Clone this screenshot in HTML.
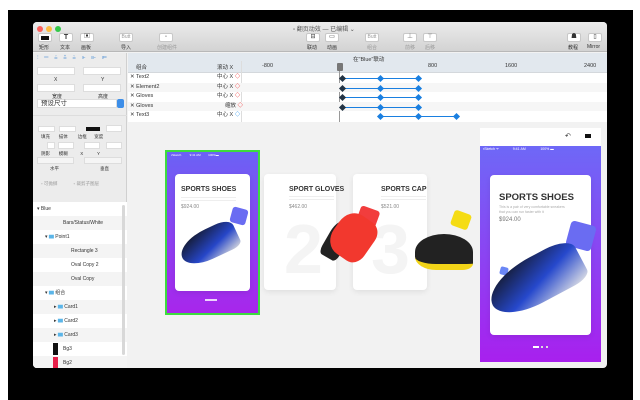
<!DOCTYPE html>
<html><head><meta charset="utf-8"><style>
*{margin:0;padding:0;box-sizing:border-box}
body{width:640px;height:400px;background:#fff;position:relative;overflow:hidden;font-family:"Liberation Sans","Noto Sans CJK SC",sans-serif;font-size:6px;color:#333}
.a{position:absolute;white-space:nowrap}
.blk{left:8px;top:10px;width:625px;height:390px;background:#000}
.win{left:33px;top:22px;width:574px;height:346px;background:#f2f2f2;overflow:hidden;border-radius:4px}
.tb{left:0;top:0;width:574px;height:30px;background:linear-gradient(#ebebeb,#d3d3d3);border-bottom:1px solid #b8b8b8}
.dot{width:6px;height:6px;border-radius:50%;top:4px}
.btn{width:14px;height:9px;background:#fff;border-radius:2px;border:1px solid #c8c8c8;top:11px}
.lbl{font-size:5px;color:#333;top:22px}
.left{left:0;top:31px;width:94px;height:315px;background:#ececec;border-right:1px solid #d0d0d0}
.inp{height:8px;background:#fff;border:1px solid #ddd}
.row{left:0;width:94px;height:14px;font-size:5px;line-height:14px}
.tl{left:95px;top:31px;width:479px;height:69px;background:#fff}
.tr{left:0;width:479px;height:9.6px;font-size:5.5px;line-height:9.6px}
.kf{width:5px;height:5px;background:#1a7fe0;transform:rotate(45deg)}
.card{background:#fff;border-radius:4px;box-shadow:0 2px 6px rgba(0,0,0,.08)}
.t{font-weight:bold;color:#333}
</style></head><body>
<div class="a blk"></div>
<div class="a win">
 <div class="a tb">
  <div class="a dot" style="left:4px;background:#fc605c"></div>
  <div class="a dot" style="left:13px;background:#fdbc40"></div>
  <div class="a dot" style="left:22px;background:#34c84a"></div>
  <div class="a" style="left:260px;top:2px;font-size:6px;color:#555">▫ 翻页动效 — 已编辑 ⌄</div>
  <div class="a btn" style="left:5px"><div class="a" style="left:2px;top:2px;width:8px;height:4px;background:#111"></div></div>
  <div class="a btn" style="left:26px;font-weight:bold;font-size:7px;text-align:center;line-height:7px">T</div>
  <div class="a btn" style="left:47px;text-align:center;font-size:6px;line-height:7px">▣</div>
  <div class="a btn" style="left:86px;font-size:5px;color:#999;text-align:center;line-height:7px">Butt</div>
  <div class="a btn" style="left:126px;font-size:5px;color:#999;text-align:center;line-height:7px">⚬</div>
  <div class="a btn" style="left:273px;text-align:center;line-height:7px">⊟</div>
  <div class="a btn" style="left:292px;text-align:center;line-height:7px">▭</div>
  <div class="a btn" style="left:332px;font-size:5px;color:#999;text-align:center;line-height:7px">Butt</div>
  <div class="a btn" style="left:370px;text-align:center;line-height:7px;color:#777">⊥</div>
  <div class="a btn" style="left:390px;text-align:center;line-height:7px;color:#777">⊤</div>
  <div class="a btn" style="left:534px;text-align:center;line-height:7px">☗</div>
  <div class="a btn" style="left:555px;text-align:center;line-height:7px">▯</div>
  <div class="a lbl" style="left:6px">矩形</div><div class="a lbl" style="left:27px">文本</div><div class="a lbl" style="left:48px">画板</div>
  <div class="a lbl" style="left:88px">导入</div><div class="a lbl" style="left:124px;color:#999">创建组件</div>
  <div class="a lbl" style="left:274px">联动</div><div class="a lbl" style="left:294px">动画</div><div class="a lbl" style="left:334px;color:#999">组合</div>
  <div class="a lbl" style="left:372px;color:#999">前移</div><div class="a lbl" style="left:392px;color:#999">后移</div>
  <div class="a lbl" style="left:535px">教程</div><div class="a lbl" style="left:554px">Mirror</div>
 </div>
 <div class="a left">
  <div class="a" style="left:4px;top:2px;color:#6aa0d8;font-size:6px;letter-spacing:2px">⫶ ═ ≚ ≛ ≚ ⊩ ⊪ ⊫</div>
  <div class="a inp" style="left:4px;top:14px;width:38px"></div><div class="a inp" style="left:50px;top:14px;width:38px"></div>
  <div class="a" style="left:21px;top:24px;font-size:5px">X</div><div class="a" style="left:68px;top:24px;font-size:5px">Y</div>
  <div class="a inp" style="left:4px;top:31px;width:38px"></div><div class="a inp" style="left:50px;top:31px;width:38px"></div>
  <div class="a" style="left:19px;top:40px;font-size:5px">宽度</div><div class="a" style="left:65px;top:40px;font-size:5px">高度</div>
  <div class="a" style="left:4px;top:46px;width:80px;height:9px;background:#fff;border:1px solid #ddd;font-size:6.5px;line-height:8px;padding-left:3px">预设尺寸</div>
  <div class="a" style="left:84px;top:46px;width:7px;height:9px;background:#3d8ee8;border-radius:2px"></div>
  <div class="a" style="left:0;top:62px;width:94px;height:1px;background:#ddd"></div>
  <div class="a inp" style="left:5px;top:73px;width:17px;height:6px"></div>
  <div class="a inp" style="left:26px;top:73px;width:17px;height:6px"></div>
  <div class="a" style="left:53px;top:74px;width:14px;height:4px;background:#111"></div>
  <div class="a inp" style="left:73px;top:72px;width:16px;height:7px"></div>
  <div class="a" style="left:8px;top:81px;font-size:4.5px">填充&nbsp;&nbsp;&nbsp;&nbsp;&nbsp;&nbsp;&nbsp;描体&nbsp;&nbsp;&nbsp;&nbsp;&nbsp;&nbsp;&nbsp;&nbsp;边框&nbsp;&nbsp;&nbsp;&nbsp;&nbsp;&nbsp;宽度</div>
  <div class="a inp" style="left:14px;top:89px;width:8px;height:7px"></div>
  <div class="a inp" style="left:25px;top:89px;width:16px;height:7px"></div>
  <div class="a inp" style="left:51px;top:89px;width:16px;height:7px"></div>
  <div class="a inp" style="left:73px;top:89px;width:16px;height:7px"></div>
  <div class="a" style="left:8px;top:98px;font-size:4.5px">阴影&nbsp;&nbsp;&nbsp;&nbsp;&nbsp;&nbsp;&nbsp;模糊&nbsp;&nbsp;&nbsp;&nbsp;&nbsp;&nbsp;&nbsp;&nbsp;&nbsp;&nbsp;X&nbsp;&nbsp;&nbsp;&nbsp;&nbsp;&nbsp;&nbsp;&nbsp;&nbsp;&nbsp;&nbsp;Y</div>
  <div class="a inp" style="left:4px;top:104px;width:37px;height:7px;background:#f5f5f5"></div>
  <div class="a inp" style="left:51px;top:104px;width:38px;height:7px;background:#f5f5f5"></div>
  <div class="a" style="left:17px;top:113px;font-size:4.5px">水平</div><div class="a" style="left:67px;top:113px;font-size:4.5px">垂直</div>
  <div class="a" style="left:8px;top:128px;font-size:4.5px;color:#999">▫ 可抛掷&nbsp;&nbsp;&nbsp;&nbsp;&nbsp;&nbsp;&nbsp;&nbsp;&nbsp;&nbsp;&nbsp;&nbsp;&nbsp;▫ 裁剪子图层</div>
  <div class="a" style="left:0;top:149px;width:94px;height:166px;background:#fff">
   <div class="a row" style="top:0;padding-left:4px">▾ Blue</div>
   <div class="a row" style="top:14px;background:#f4f4f4;padding-left:30px">Bars/Status/White</div>
   <div class="a row" style="top:28px;padding-left:12px">▾ <span style="color:#5bb5e8">▆</span> Point1</div>
   <div class="a row" style="top:42px;background:#f4f4f4;padding-left:38px">Rectangle 3</div>
   <div class="a row" style="top:56px;padding-left:38px">Oval Copy 2</div>
   <div class="a row" style="top:70px;background:#f4f4f4;padding-left:38px">Oval Copy</div>
   <div class="a row" style="top:84px;padding-left:12px">▾ <span style="color:#5bb5e8">▆</span> 组合</div>
   <div class="a row" style="top:98px;background:#f4f4f4;padding-left:21px">▸ <span style="color:#5bb5e8">▆</span> Card1</div>
   <div class="a row" style="top:112px;padding-left:21px">▸ <span style="color:#5bb5e8">▆</span> Card2</div>
   <div class="a row" style="top:126px;background:#f4f4f4;padding-left:21px">▸ <span style="color:#5bb5e8">▆</span> Card3</div>
   <div class="a row" style="top:140px;padding-left:30px">Bg3</div>
   <div class="a" style="left:20px;top:141px;width:5px;height:12px;background:#111"></div>
   <div class="a row" style="top:154px;background:#f4f4f4;padding-left:30px">Bg2</div>
   <div class="a" style="left:20px;top:155px;width:5px;height:11px;background:#e8204a"></div>
   <div class="a" style="left:89px;top:3px;width:3px;height:150px;background:#d8d8d8;border-radius:2px"></div>
  </div>
 </div>
 <div class="a tl">
  <div class="a" style="left:0;top:0;width:479px;height:20px;background:#e2e8ee;border-bottom:1px solid #d4d8dc"></div>
  <div class="a" style="left:225px;top:2px;font-size:5.5px">在"Blue"联动</div>
  <div class="a" style="left:8px;top:10px;font-size:5.5px">组合</div>
  <div class="a" style="left:89px;top:10px;font-size:5.5px">滚动 X</div>
  <div class="a" style="left:134px;top:10px;font-size:5.5px">-800</div>
  <div class="a" style="left:300px;top:10px;font-size:5.5px">800</div>
  <div class="a" style="left:377px;top:10px;font-size:5.5px">1600</div>
  <div class="a" style="left:456px;top:10px;font-size:5.5px">2400</div>
  <div class="a" style="left:113px;top:8px;width:1px;height:61px;background:#ddd"></div>
  <div class="a" style="left:209px;top:10px;width:6px;height:8px;background:#777;border-radius:1px"></div>
  <div class="a" style="left:211px;top:18px;width:1px;height:51px;background:#999"></div>
  <div class="a tr" style="top:20px;padding-left:2px">✕ Text2<span class="a" style="left:89px">中心 X <b style="color:#e33">◇</b></span></div>
  <div class="a tr" style="top:29.6px;background:#f6f6f6;padding-left:2px">✕ Element2<span class="a" style="left:89px">中心 X <b style="color:#e33">◇</b></span></div>
  <div class="a tr" style="top:39.2px;padding-left:2px">✕ Gloves<span class="a" style="left:89px">中心 X <b style="color:#e33">◇</b></span></div>
  <div class="a tr" style="top:48.8px;background:#f6f6f6;padding-left:2px">✕ Gloves<span class="a" style="left:97px">缩放 <b style="color:#e33">◇</b></span></div>
  <div class="a tr" style="top:58.4px;padding-left:2px">✕ Text3<span class="a" style="left:89px">中心 X <b style="color:#39e">◇</b></span></div>
  <div class="a" style="left:215px;top:25px;width:76px;height:1px;background:#1a7fe0"></div>
  <div class="a" style="left:215px;top:34.5px;width:76px;height:1px;background:#1a7fe0"></div>
  <div class="a" style="left:215px;top:44px;width:76px;height:1px;background:#1a7fe0"></div>
  <div class="a" style="left:215px;top:54px;width:76px;height:1px;background:#1a7fe0"></div>
  <div class="a" style="left:253px;top:63px;width:76px;height:1px;background:#1a7fe0"></div>
  <div class="a kf" style="left:212px;top:23px;background:#234"></div><div class="a kf" style="left:250px;top:23px"></div><div class="a kf" style="left:288px;top:23px"></div>
  <div class="a kf" style="left:212px;top:32.5px;background:#234"></div><div class="a kf" style="left:250px;top:32.5px"></div><div class="a kf" style="left:288px;top:32.5px"></div>
  <div class="a kf" style="left:212px;top:42px;background:#234"></div><div class="a kf" style="left:250px;top:42px"></div><div class="a kf" style="left:288px;top:42px"></div>
  <div class="a kf" style="left:212px;top:52px;background:#234"></div><div class="a kf" style="left:250px;top:52px"></div><div class="a kf" style="left:288px;top:52px"></div>
  <div class="a kf" style="left:250px;top:61px"></div><div class="a kf" style="left:288px;top:61px"></div><div class="a kf" style="left:326px;top:61px"></div>
 </div>
 <!-- canvas -->
 <div class="a" style="left:132px;top:128px;width:95px;height:165px;border:2px solid #3ddc3d;background:linear-gradient(#6b62f5,#a826ec)">
  <div class="a" style="left:4px;top:1px;font-size:3px;color:#fff">▪Sketch&nbsp;&nbsp;&nbsp;&nbsp;&nbsp;&nbsp;&nbsp;&nbsp;&nbsp;&nbsp;9:41 AM&nbsp;&nbsp;&nbsp;&nbsp;&nbsp;&nbsp;&nbsp;&nbsp;&nbsp;100%▬</div>
  <div class="a card" style="left:8px;top:22px;width:75px;height:117px">
   <div class="a t" style="left:6px;top:12px;font-size:7px">SPORTS SHOES</div>
   <div class="a" style="left:6px;top:23px;width:55px;height:4px;border-top:1px solid #eee;border-bottom:1px solid #eee"></div>
   <div class="a" style="left:6px;top:30px;font-size:5px;color:#888">$924.00</div>
   <div class="a" style="left:56px;top:34px;width:16px;height:16px;background:#6a6cf2;border-radius:3px;transform:rotate(15deg)"></div>
   <div class="a" style="left:4px;top:55px;width:60px;height:30px;background:linear-gradient(160deg,#111,#2646c8 60%,#ddd);border-radius:60% 30% 20% 50%;transform:rotate(-25deg)"></div>
  </div>
  <div class="a" style="left:38px;top:147px;width:12px;height:2px;background:#fff;opacity:.8"></div>
 </div>
 <div class="a card" style="left:231px;top:152px;width:72px;height:116px">
  <div class="a t" style="left:25px;top:12px;font-size:7px">SPORT GLOVES</div>
  <div class="a" style="left:25px;top:22px;width:45px;height:4px;border-top:1px solid #eee;border-bottom:1px solid #eee"></div>
  <div class="a" style="left:25px;top:30px;font-size:5px;color:#888">$462.00</div>
  <div class="a" style="left:20px;top:35px;font-size:70px;color:#f4f4f4;font-weight:bold">2</div>
 </div>
 <div class="a card" style="left:320px;top:152px;width:74px;height:116px">
  <div class="a t" style="left:28px;top:12px;font-size:7px">SPORTS CAP</div>
  <div class="a" style="left:28px;top:22px;width:45px;height:4px;border-top:1px solid #eee;border-bottom:1px solid #eee"></div>
  <div class="a" style="left:28px;top:30px;font-size:5px;color:#888">$521.00</div>
  <div class="a" style="left:18px;top:35px;font-size:70px;color:#f4f4f4;font-weight:bold">3</div>
 </div>
 <div class="a" style="left:325px;top:186px;width:20px;height:18px;background:#f23d3d;border-radius:3px;transform:rotate(20deg)"></div>
 <div class="a" style="left:294px;top:198px;width:20px;height:40px;background:#222;border-radius:40% 40% 20% 20%;transform:rotate(30deg)"></div>
 <div class="a" style="left:300px;top:192px;width:40px;height:46px;background:#f2382e;border-radius:40% 30% 30% 40%;transform:rotate(35deg)"></div>
 <div class="a" style="left:419px;top:190px;width:18px;height:16px;background:#f5dc14;border-radius:3px;transform:rotate(20deg)"></div>
 <div class="a" style="left:382px;top:212px;width:58px;height:36px;background:#222;border-radius:55% 55% 20% 40%;border-bottom:6px solid #f2d418"></div>
 <div class="a" style="left:447px;top:106px;width:121px;height:234px;background:#fff">
  <div class="a" style="left:85px;top:4px;font-size:7px">↶</div>
  <div class="a" style="left:105px;top:6px;width:6px;height:4px;background:#111"></div>
  <div class="a" style="left:0;top:18px;width:121px;height:216px;background:linear-gradient(#6e68f7,#a820ee)">
   <div class="a" style="left:3px;top:1px;font-size:3.5px;color:#fff">▪Sketch ᯤ&nbsp;&nbsp;&nbsp;&nbsp;&nbsp;&nbsp;&nbsp;&nbsp;&nbsp;&nbsp;&nbsp;&nbsp;&nbsp;&nbsp;9:41 AM&nbsp;&nbsp;&nbsp;&nbsp;&nbsp;&nbsp;&nbsp;&nbsp;&nbsp;&nbsp;&nbsp;&nbsp;&nbsp;&nbsp;&nbsp;100% ▬</div>
   <div class="a card" style="left:10px;top:29px;width:101px;height:160px;overflow:visible">
    <div class="a t" style="left:9px;top:17px;font-size:9.5px">SPORTS SHOES</div>
    <div class="a" style="left:9px;top:30px;font-size:3.5px;color:#aaa;line-height:5px">This is a pair of very comfortable sneakers<br>that you can run faster with it</div>
    <div class="a" style="left:9px;top:42px;font-size:6px;color:#777">$924.00</div>
    <div class="a" style="left:78px;top:48px;width:26px;height:26px;background:#6a6cf2;border-radius:4px;transform:rotate(15deg)"></div>
    <div class="a" style="left:10px;top:92px;width:8px;height:8px;background:#6a86f5;border-radius:2px;transform:rotate(15deg)"></div>
    <div class="a" style="left:-4px;top:82px;width:100px;height:46px;background:linear-gradient(160deg,#111,#2648cc 55%,#e6e6e6);border-radius:60% 30% 20% 50%;transform:rotate(-28deg)"></div>
   </div>
   <div class="a" style="left:53px;top:200px;width:6px;height:2px;background:#fff"></div>
   <div class="a" style="left:61px;top:200px;width:2px;height:2px;background:#ddd"></div>
   <div class="a" style="left:66px;top:200px;width:2px;height:2px;background:#ddd"></div>
  </div>
 </div>
</div>
</body></html>
